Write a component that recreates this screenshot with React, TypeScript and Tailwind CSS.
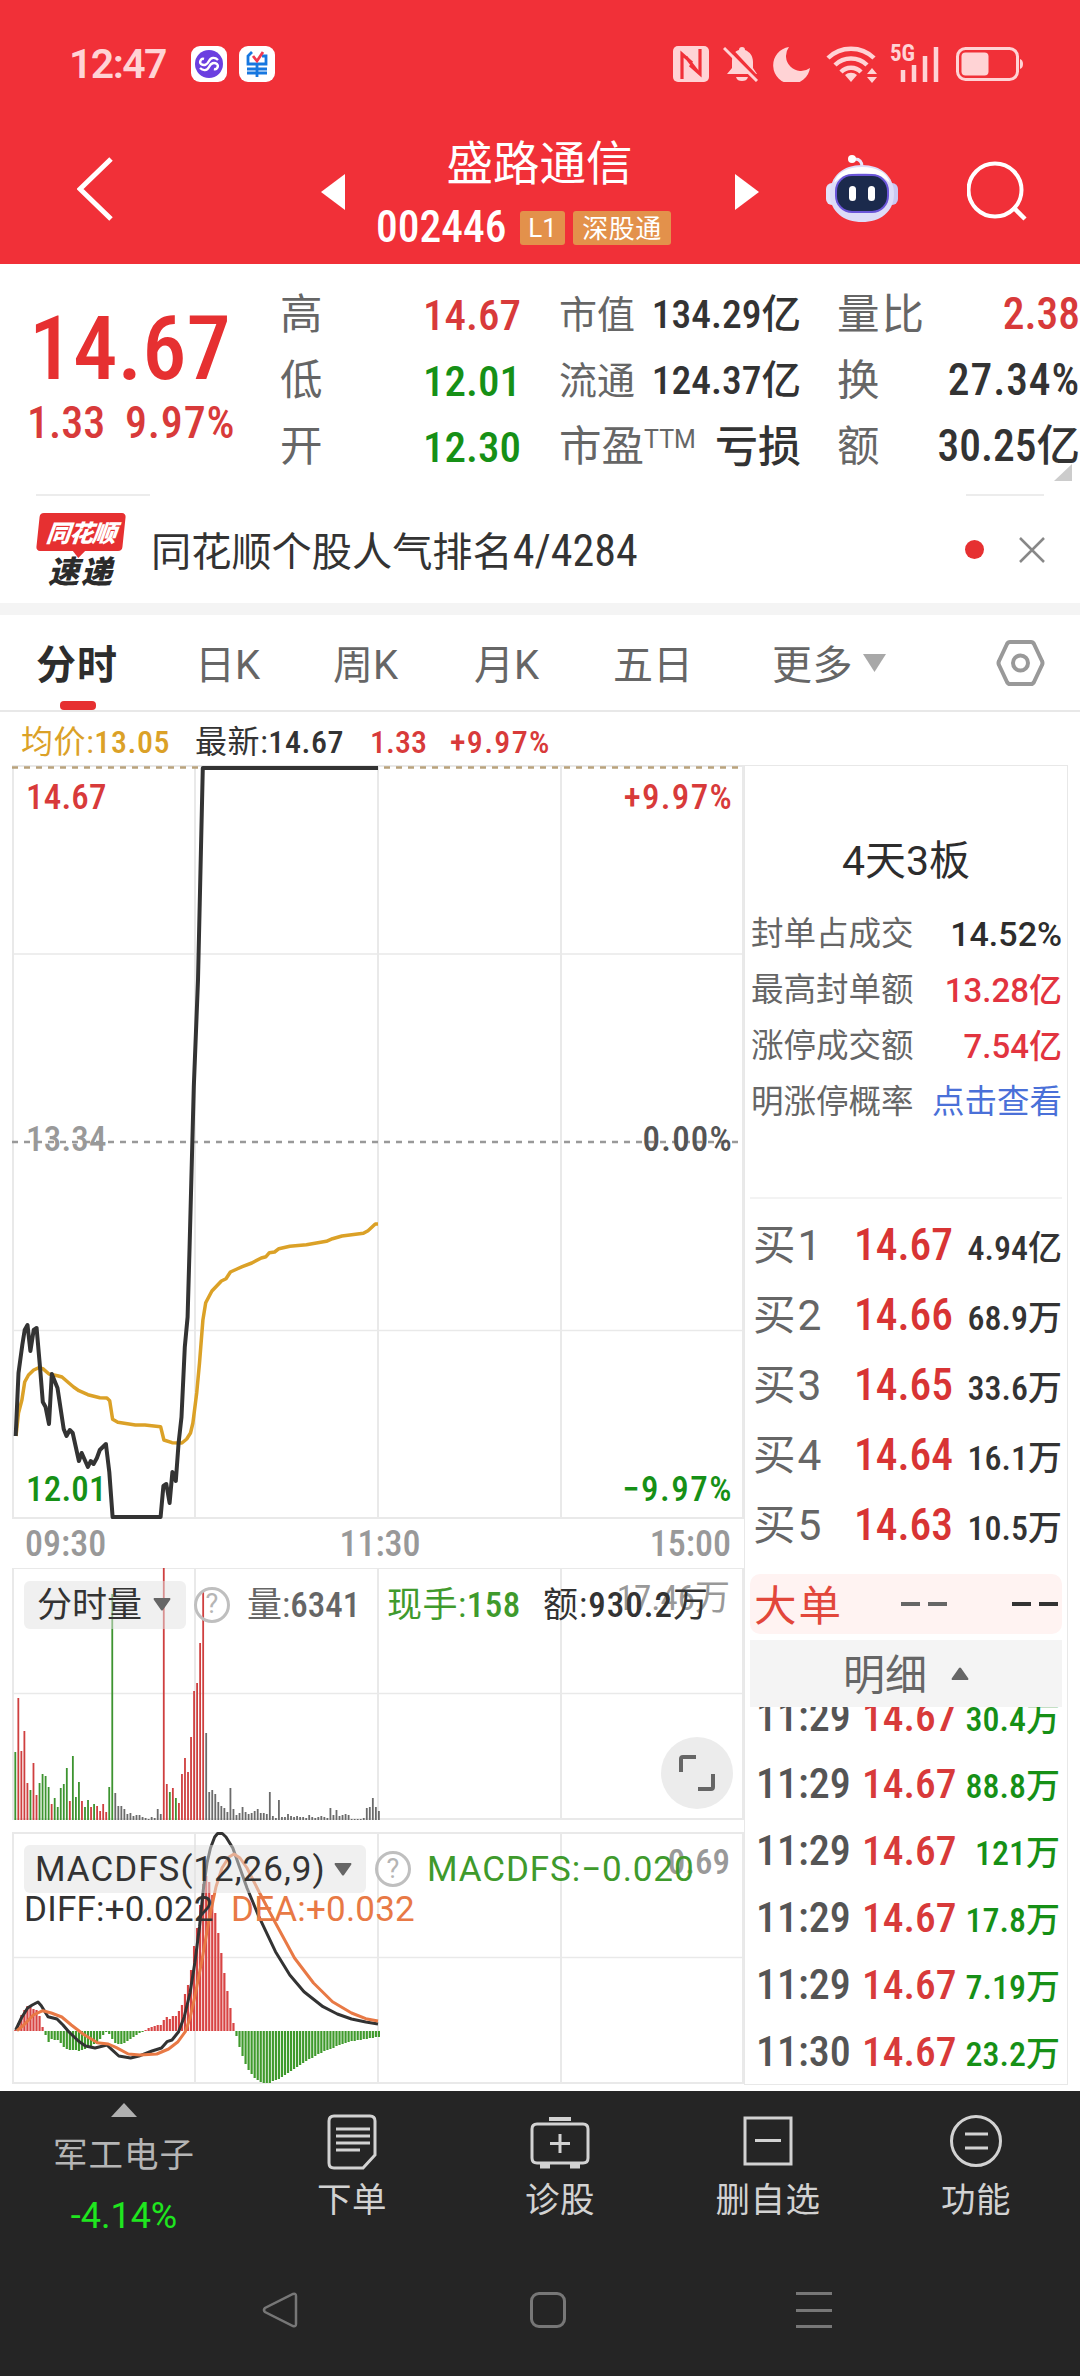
import React from 'react';

const UP = '#d83a3a';
const DOWN = '#169016';
const GRID_X = [13, 195, 378, 561, 743];

// intraday series, one slot per minute
const priceLine =
  '15.7,1436 18.5,1373 22.3,1345 24.7,1330 27.5,1325 30.4,1351 33.7,1330 36.6,1328 40,1367 42.8,1402 45.6,1407 49,1424 51.8,1374 57.5,1388 63.7,1429 66.5,1436 69.8,1430 72.7,1433 78.9,1461 81.7,1453 87.9,1467 90.7,1461 93.6,1464 96.9,1458 99.8,1450 105.9,1444 109.3,1472 112.6,1517 160.6,1517 163.4,1486 166.3,1484 169.6,1503 172.4,1472 175.8,1481 178.6,1443 181.5,1417 184.8,1347 187.6,1317 189.5,1250 192,1155 193.8,1087 198,980 202.8,768 378,768';
const avgLine =
  '16,1436 18.5,1413 21.9,1400 24.7,1382 28.5,1375 33.7,1370 39,1367.7 42.8,1368.7 49,1374 57.5,1375.7 62,1377 68.9,1383 73.6,1387 78.9,1390.7 87.9,1394.7 99.8,1397.7 106.9,1398 109.7,1400.7 112.6,1419.3 117.8,1422.3 135.4,1425 144.9,1425 160.6,1426.7 163.9,1440 172,1442.7 181.9,1443 186.7,1439 190.5,1433 192.9,1423 196.7,1393 199.5,1363 202.9,1320 205.7,1302.7 211.9,1291 221.4,1281 226,1278.7 230.4,1272 237,1269 242.3,1266.7 251.8,1263 261.3,1258 266,1256.7 269.4,1252.7 274.6,1252 278.9,1248.7 289.8,1246.3 306.4,1244.7 326.4,1241.3 332.5,1238.7 342,1236 363.4,1233.3 368,1230.7 375.3,1224 378,1224';
const diffLine =
  '15.7,2030 21.4,2018 27.6,2008 32.3,2005 38,2002 41.3,2005.7 48,2016.7 57,2019 63,2025 69,2032 78.4,2041 85.5,2046 95,2048 106.9,2045 111.6,2049.3 118.8,2056 130.6,2058 140,2055.7 152,2051 161.5,2048 167,2041.7 172,2040 178.6,2031.7 184.3,2016.7 190,1993 194.8,1963 199.5,1926.7 203.3,1890 207,1863 210.5,1848 214.7,1837 217.6,1833.5 222.3,1833.5 226,1837 232.8,1848 239.9,1868 247,1888 258.9,1916.7 275.5,1951.7 289.8,1975 304,1991.7 323,2006.7 337.3,2014 351.5,2019 365.8,2022 378,2024';
const deaLine =
  '17,2030.7 23.8,2025 33.3,2015 42.8,2010.7 51.3,2013 61.8,2017 71.3,2025 83,2034 97.4,2042.7 108.3,2044 116.4,2047.7 128.3,2054 140,2055 156.8,2054 168.6,2049 178,2041.7 185.3,2031.7 190,2018 194.8,1996.7 202,1960 209,1920 216,1886.7 222,1868 229,1857 234,1854 240,1858 247,1868 259,1891.7 275.5,1923 294.5,1958 313.5,1983 332.5,2001.7 351.5,2013 365.8,2018.7 378,2021';

const volumes = [
  68, 122, 69, 89, 37, 30, 57, 25, 37, 46, 44, 33, 16, 22, 13, 32, 36, 52, 19, 64, 23, 38, 19, 13, 20, 13, 16, 14, 9, 16,
  8, 33, 226, 27, 14, 14, 11, 6, 7, 4, 5, 5, 3, 2, 1, 3, 2, 11, 6, 253, 36, 28, 32, 22, 17, 46, 62, 48, 83, 129,
  137, 177, 228, 87, 28, 30, 26, 18, 14, 12, 8, 32, 11, 5, 7, 13, 8, 6, 7, 9, 11, 7, 7, 6, 28, 4, 2, 20, 3, 3,
  6, 4, 3, 4, 3, 3, 2, 5, 3, 2, 3, 4, 3, 2, 12, 5, 10, 4, 5, 6, 5, 1, 1, 1, 1, 2, 12, 13, 22, 13, 9,
];
const volumeSides = 'grrrrgrrggggrgggggrgggrggrgrrrrggkkkkkkkkkkkkkkkkrrgrgrrrrrrrrr';
const sideColor: Record<string, string> = { r: '#cf3f3f', g: '#3d9430', k: '#6b6b6b' };

const macd = [
  1, 8, 16, 21, 25, 24, 22, 21, 15, 4, -4, -11, -8, -9, -9, -12, -16, -18, -19, -19, -19, -20, -19, -18, -16, -15, -13, -13, -8, -4,
  -1, -3, -8, -12, -13, -13, -12, -10, -8, -6, -4, -2, -1, 1, 3, 4, 5, 6, 6, 11, 14, 12, 15, 15, 20, 26, 37, 46, 61, 85,
  103, 126, 147, 155, 149, 136, 118, 98, 78, 58, 40, 23, 8, -5, -16, -25, -33, -39, -43, -47, -49, -51, -52, -52, -52, -50, -49, -48, -46, -44,
  -42, -40, -38, -36, -34, -32, -30, -28, -27, -25, -23, -22, -20, -19, -18, -17, -15, -14, -13, -12, -11, -10, -10, -9, -9, -8, -8, -7, -7, -6, -6,
];

const slotX = (i: number) => 15.3 + i * 3.03;

function StatusBar() {
  return (
    <div className="flex h-[128px] items-center pl-[69px] pr-[56px] text-[#ffd3d5]">
      <span className="w-[122px] font-[Roboto] text-[41px] font-semibold leading-none tracking-[-1.600px]">12:47</span>
      <svg width="36" height="36" viewBox="0 0 36 36">
        <rect width="36" height="36" rx="9" fill="#fff" />
        <circle cx="18" cy="18" r="14" fill="#6b3fe0" />
        <path d="M27 14c-3-3-7-3-9 1s-5 5-8 3c-2-2 0-6 3-5M9 22c3 3 7 3 9-1s5-5 8-3c2 2 0 6-3 5" fill="none" stroke="#fff" strokeWidth="2.4" />
      </svg>
      <svg className="ml-[12px]" width="36" height="36" viewBox="0 0 36 36">
        <rect width="36" height="36" rx="9" fill="#fff" />
        <path d="M13 6l-4 4v8h18V10h-4M8 23h20M8 27h20M18 18v13" fill="none" stroke="#1677e0" strokeWidth="2.8" />
        <path d="M14 10l4 5 6-9" fill="none" stroke="#f03a50" strokeWidth="2.8" />
      </svg>
      <div className="ml-auto flex items-center">
        <svg width="36" height="36" viewBox="0 0 36 36">
          <rect width="36" height="36" rx="5" fill="#ffd3d5" />
          <path d="M9 33V8l10 9M27 3v25l-10-9M13 11l11 14" fill="none" stroke="#f13038" strokeWidth="3.2" />
        </svg>
        <svg className="ml-[14px]" width="38" height="36" viewBox="0 0 38 36">
          <path d="M19 1c2 0 3 1 3 3 5 2 8 6 8 12v6l4 6H4l5-6v-7C9 9 12 5 16 4c0-2 1-3 3-3zM13 31h12c-1 3-3 4-6 4s-5-1-6-4z" fill="#ffd3d5" />
          <path d="M3 -1l34 36" stroke="#f13038" strokeWidth="4" />
          <path d="M1 2l33 33" stroke="#ffd3d5" strokeWidth="3" />
        </svg>
        <svg className="ml-[12px]" width="38" height="36" viewBox="0 0 38 36">
          <path d="M16 1a15 15 0 0 0 21 21A18.500 18.500 0 1 1 16 1z" fill="#ffd3d5" />
        </svg>
        <svg className="ml-[15px]" width="54" height="38" viewBox="0 0 54 38">
          <g fill="none" stroke="#ffd3d5" strokeWidth="4.500">
            <path d="M2 13a33 33 0 0 1 46 0" />
            <path d="M9 20a23 23 0 0 1 32 0" />
            <path d="M15 27a14 14 0 0 1 20 0" />
          </g>
          <path d="M25 37l-6-7a9 9 0 0 1 12 0z" fill="#ffd3d5" />
          <path d="M46 23l5 6H41zM46 38l5-6H41z" fill="#ffd3d5" />
        </svg>
        <div className="relative ml-[20px] h-[36px] w-[40px]">
          <span className="absolute -left-[10px] -top-[2px] font-[Roboto_Condensed] text-[23px] font-bold leading-[20px]">5G</span>
          <svg width="40" height="36" viewBox="0 0 40 36">
            <path d="M3 36V24M14 36V19M25 36V10M36 36V1" stroke="#ffd3d5" strokeWidth="4.500" />
          </svg>
        </div>
        <svg className="ml-[16px]" width="68" height="36" viewBox="0 0 68 36">
          <rect x="1.500" y="2.500" width="60" height="31" rx="8" fill="none" stroke="#ffd3d5" strokeWidth="3" />
          <rect x="5.500" y="6.500" width="27" height="23" rx="4" fill="#ffd3d5" />
          <path d="M64 13q3 1 3 5t-3 5z" fill="#ffd3d5" />
        </svg>
      </div>
    </div>
  );
}

function Robot() {
  return (
    <svg width="72" height="68" viewBox="0 0 72 68">
      <path d="M36 12c0-5-2-8-7-8" fill="none" stroke="#e9e6fb" strokeWidth="3" />
      <circle cx="26" cy="4" r="4" fill="#fff" />
      <rect x="0" y="28" width="12" height="22" rx="6" fill="#e3e2fa" />
      <rect x="60" y="28" width="12" height="22" rx="6" fill="#c9c8f2" />
      <path d="M36 10c19 0 32 11 32 29S54 67 36 67 4 57 4 39s13-29 32-29z" fill="#dddcf8" />
      <path d="M36 12c14 0 25 5 28 16-8-8-18-10-28-10s-20 2-28 10c3-11 14-16 28-16z" fill="#fff" />
      <rect x="9" y="19" width="54" height="39" rx="17" fill="#6a55d8" />
      <rect x="11" y="21" width="50" height="35" rx="15" fill="#1b2a4c" />
      <rect x="23" y="31" width="7" height="15" rx="3.500" fill="#fff" />
      <rect x="42" y="31" width="7" height="15" rx="3.500" fill="#fff" />
    </svg>
  );
}

function TitleBar() {
  return (
    <div className="flex h-[136px] pl-[77px] text-white">
      <svg className="mt-[29px]" width="36" height="64" viewBox="0 0 36 64">
        <path d="M34 2L3 32l31 30" fill="none" stroke="#fff" strokeWidth="5" />
      </svg>
      <svg className="ml-[208px] mt-[46px]" width="24" height="36" viewBox="0 0 24 36">
        <path d="M24 0v36L0 18z" fill="#fff" />
      </svg>
      <div className="ml-[31px] w-[327px]">
        <div className="-mt-[1px] text-center font-[Noto_Sans_CJK_SC] text-[46.500px] leading-[66px]">盛路通信</div>
        <div className="flex h-[69px] items-center gap-[8px]">
          <span className="mr-[4px] w-[132px] font-[Roboto_Condensed] text-[43.500px] font-medium leading-none">002446</span>
          <span className="h-[34px] w-[45px] rounded-[3px] bg-[#e3914b] text-center font-[Roboto] text-[26px] leading-[34px]">L1</span>
          <span className="h-[34px] w-[98px] rounded-[3px] bg-[#e3914b] text-center font-[Noto_Sans_CJK_SC] text-[26px] leading-[32px] tracking-[0.5px]">深股通</span>
        </div>
      </div>
      <svg className="ml-[32px] mt-[46px]" width="24" height="36" viewBox="0 0 24 36">
        <path d="M0 0v36l24-18z" fill="#fff" />
      </svg>
      <div className="ml-[67px] mt-[27px]"><Robot /></div>
      <svg className="ml-[69px] mt-[33px]" width="60" height="60" viewBox="0 0 60 60">
        <circle cx="28" cy="29" r="26.500" fill="none" stroke="#fff" strokeWidth="4" />
        <path d="M46 46l12 12" stroke="#fff" strokeWidth="4.500" />
      </svg>
    </div>
  );
}

function QuoteRow({ label, value, color, size, small }: { label: React.ReactNode; value: string; color: string; size?: string; small?: boolean }) {
  return (
    <div className="flex h-[66px] items-center justify-between">
      <span className={small ? 'text-[38px] text-[#666]' : 'text-[42.500px] text-[#666]'}>{label}</span>
      <span className={`font-medium ${size || 'text-[43.500px]'} ${color}`}>{value}</span>
    </div>
  );
}

function Quote() {
  return (
    <div className="relative flex h-[230px] whitespace-nowrap font-[Roboto_Condensed,'Noto_Sans_CJK_SC',sans-serif]">
      <div className="w-[280px] pt-[45px] text-[#e63031]">
        <div className="pl-[29px] text-[88.500px] font-medium leading-[80px]">14.67</div>
        <div className="flex pl-[27px] text-[44px] font-medium leading-[69px] text-[#d83a3a]">
          <span className="w-[98px]">1.33</span>
          <span className="tracking-[0.8px]">9.97%</span>
        </div>
      </div>
      <div className="w-[241px] pt-[18px] leading-none">
        <QuoteRow label="高" value="14.67" color="text-[#d83a3a]" size="text-[43px]" />
        <QuoteRow label="低" value="12.01" color="text-[#169016]" size="text-[43px]" />
        <QuoteRow label="开" value="12.30" color="text-[#169016]" size="text-[43px]" />
      </div>
      <div className="ml-[38px] w-[242px] pt-[18px] leading-none">
        <QuoteRow label="市值" value="134.29亿" color="text-[#333]" size="text-[39.500px]" small />
        <QuoteRow label="流通" value="124.37亿" color="text-[#333]" size="text-[39.500px]" small />
        <QuoteRow label={<>市盈<sup className="relative -top-[13px] align-baseline font-[Roboto] text-[25px]">TTM</sup></>} value="亏损" color="text-[#333]" size="text-[43px]" />
      </div>
      <div className="ml-[36px] w-[243px] pt-[18px] leading-none">
        <QuoteRow label={<span className="tracking-[2px]">量比</span>} value="2.38" color="text-[#d83a3a]" />
        <QuoteRow label="换" value="27.34%" color="text-[#333]" size="text-[43.500px] tracking-[0.9px]" />
        <QuoteRow label="额" value="30.25亿" color="text-[#333]" />
      </div>
      <svg className="absolute bottom-[13px] right-[8px]" width="18" height="17" viewBox="0 0 18 17">
        <path d="M18 0v17H0z" fill="#ccc" />
      </svg>
    </div>
  );
}

function NewsFlash() {
  return (
    <div>
      <div className="flex h-[2px] justify-between px-[36px]">
        <div className="w-[114px] bg-[#ececec]" />
        <div className="w-[78px] bg-[#ececec]" />
      </div>
      <div className="flex h-[107px] items-center pl-[37px] pr-[35px]">
        <div className="flex w-[88px] flex-col items-center font-[Noto_Sans_CJK_SC] font-black italic">
          <div className="relative h-[38px] w-[86px] -skew-x-6 rounded-[4px] bg-[#e63031] text-center text-[24px] leading-[37px] tracking-[-1px] text-white">
            同花顺
            <svg className="absolute left-[36px] top-[37px]" width="14" height="8" viewBox="0 0 14 8">
              <path d="M0 0h14L7 8z" fill="#e63031" />
            </svg>
          </div>
          <div className="mt-[2px] text-[31px] leading-[34px] tracking-[2px] text-[#2b2b2b]">速递</div>
        </div>
        <div className="ml-[26px] pt-[2px] font-[Roboto_Condensed,'Noto_Sans_CJK_SC'] text-[40.200px] text-[#333]">
          同花顺个股人气排名<span className="font-[Roboto_Condensed] text-[44px]">4/4284</span>
        </div>
        <div className="ml-auto size-[19px] rounded-full bg-[#e63031]" />
        <svg className="ml-[35px]" width="26" height="26" viewBox="0 0 26 26">
          <path d="M1 1l24 24M25 1L1 25" stroke="#888" strokeWidth="2.500" />
        </svg>
      </div>
      <div className="h-[12px] bg-[#f4f4f4]" />
    </div>
  );
}

function Tabs() {
  return (
    <div className="relative flex h-[97px] items-center border-b-2 border-[#e8e8e8] pl-[36px] pr-[35px] font-[Roboto,'Noto_Sans_CJK_SC'] text-[40px] leading-[60px] text-[#666]">
      <span className="w-[159px] pt-[6px] font-bold tracking-[1px] text-[#2d2d2d]">分时</span>
      <span className="w-[138px] pt-[6px]">日K</span>
      <span className="w-[141px] pt-[6px]">周K</span>
      <span className="w-[139px] pt-[6px]">月K</span>
      <span className="w-[159px] pt-[6px]">五日</span>
      <span className="flex items-center gap-[10px]">
        <span className="pt-[6px] tracking-[0.5px]">更多</span>
        <svg width="23" height="18" viewBox="0 0 23 18">
          <path d="M0 0h23L11.500 18z" fill="#a8a8a8" />
        </svg>
      </span>
      <svg className="ml-auto" width="49" height="46" viewBox="0 0 49 46">
        <path d="M14 2h21q2 0 3 2l8 17q1 2 0 4l-8 17q-1 2-3 2H14q-2 0-3-2L3 25q-1-2 0-4l8-17q1-2 3-2z" fill="none" stroke="#999" strokeWidth="4" />
        <circle cx="24.500" cy="23" r="7.500" fill="none" stroke="#999" strokeWidth="4" />
      </svg>
      <div className="absolute bottom-0 left-[60px] h-[9px] w-[36px] rounded-[4px] bg-[#e63031]" />
    </div>
  );
}

function Grid({ top, mid, bottom }: { top: number; mid: number[]; bottom: number }) {
  return (
    <g stroke="#e9e9e9" strokeWidth="2">
      {GRID_X.map((x) => <path key={x} d={`M${x} ${top}V${bottom}`} />)}
      {[top + 1, bottom - 1].map((y) => <path key={y} d={`M12 ${y}H744`} />)}
      {mid.map((y) => <path key={y} d={`M12 ${y}H744`} strokeWidth="1.500" />)}
    </g>
  );
}

function PriceChart() {
  return (
    <svg className="block font-[Roboto_Condensed] text-[35px]" width="744" height="754" viewBox="0 765 744 754">
      <Grid top={765} mid={[954, 1330.5]} bottom={1519} />
      <path d="M12 767.500H744" stroke="#b9a27c" strokeWidth="2.500" strokeDasharray="6 6" />
      <path d="M12 1142H744" stroke="#999" strokeWidth="2.500" strokeDasharray="6 6" />
      <polyline points={avgLine} fill="none" stroke="#dba127" strokeWidth="3.500" strokeLinejoin="round" />
      <polyline points={priceLine} fill="none" stroke="#333" strokeWidth="4" strokeLinejoin="round" />
      <g className="font-medium">
        <text className="tracking-[0.2px]" x="26" y="809" fill={UP}>14.67</text>
        <text className="tracking-[1.300px]" x="733" y="809" fill={UP} textAnchor="end">+9.97%</text>
        <text className="tracking-[0.2px]" x="26" y="1151" fill="#999">13.34</text>
        <text className="tracking-[1.200px]" x="733" y="1151" fill="#555" textAnchor="end">0.00%</text>
        <text className="tracking-[0.2px]" x="26" y="1501" fill={DOWN}>12.01</text>
        <text className="tracking-[1.500px]" x="733" y="1501" fill={DOWN} textAnchor="end">−9.97%</text>
      </g>
    </svg>
  );
}

function Caret({ up }: { up?: boolean }) {
  return (
    <svg className={up ? 'rotate-180' : ''} width="18" height="13" viewBox="0 0 18 13">
      <path d="M1 0h16q1 1 0 2L10 12q-1 1-2 0L1 2Q0 1 1 0z" fill="#666" />
    </svg>
  );
}

function Help() {
  return (
    <span className="flex size-[36px] items-center justify-center rounded-full border-[3px] border-[#bfbfbf] font-[Roboto] text-[27px] leading-none text-[#b5b5b5]">?</span>
  );
}

function VolumeChart() {
  return (
    <div className="relative h-[252px] whitespace-nowrap font-[Roboto_Condensed,'Noto_Sans_CJK_SC'] text-[35px] leading-[48px]">
      <svg className="block" width="744" height="252" viewBox="0 1568 744 252">
        <Grid top={1567} mid={[1693.5]} bottom={1820} />
        {volumes.map((v, i) => (
          <rect key={i} x={slotX(i) - 0.9} y={1820 - v} width="1.8" height={v} fill={sideColor[volumeSides[i] || 'k']} />
        ))}
      </svg>
      <div className="absolute right-[14px] top-[7px] text-[#999]">17.46万</div>
      <div className="absolute left-[24px] top-[11px] flex items-center">
        <div className="flex h-[48px] w-[162px] items-center justify-between rounded-[6px] bg-[#e2e2e2]/50 pl-[13px] pr-[15px] text-[#333]"><span className="pt-[3px]">分时量</span> <Caret /></div>
        <div className="ml-[8px]"><Help /></div>
        <span className="ml-[17px] w-[140px] pt-[3px] text-[#666]">量:<b className="font-medium">6341</b></span>
        <span className="w-[156px] pt-[3px] tracking-[0.5px] text-[#3f9a2c]">现手:<b className="font-medium">158</b></span>
        <span className="pt-[3px] tracking-[1px] text-[#333]">额:<b className="font-medium">930.2</b>万</span>
      </div>
      <div className="absolute bottom-[11px] right-[11px] flex size-[72px] items-center justify-center rounded-full bg-[#ececec]">
        <svg width="38" height="38" viewBox="0 0 38 38">
          <path d="M3 18V5q0-2 2-2h13M35 20v13q0 2-2 2H20" fill="none" stroke="#666" strokeWidth="4" />
        </svg>
      </div>
    </div>
  );
}

function MacdChart() {
  return (
    <div className="relative mt-[12px] h-[252px] whitespace-nowrap font-[Roboto] text-[35px] leading-[48px]">
      <svg className="block" width="744" height="252" viewBox="0 1832 744 252">
        <Grid top={1832} mid={[1957.5]} bottom={2084} />
        {macd.map((v, i) => (
          <rect key={i} x={slotX(i) - 1.1} y={v > 0 ? 2031 - v : 2031} width="2.2" height={Math.abs(v)} fill={v > 0 ? '#d84444' : '#3f9a2c'} />
        ))}
        <polyline points={diffLine} fill="none" stroke="#333" strokeWidth="3" strokeLinejoin="round" />
        <polyline points={deaLine} fill="none" stroke="#e87945" strokeWidth="3" strokeLinejoin="round" />
      </svg>
      <div className="absolute right-[14px] top-[7px] font-[Roboto_Condensed] font-medium text-[#999]">0.69</div>
      <div className="absolute left-[24px] top-[12px] flex items-center">
        <div className="flex h-[48px] w-[342px] items-center justify-between rounded-[6px] bg-[#e2e2e2]/50 pl-[11px] pr-[14px] text-[#333]">
          <span className="pt-[2px] tracking-[1px]">MACDFS(12,26,9)</span> <Caret />
        </div>
        <div className="ml-[9px]"><Help /></div>
        <span className="ml-[16px] pt-[2px] tracking-[0.9px] text-[#3f9a2c]">MACDFS:−0.020</span>
      </div>
      <div className="absolute left-[24px] top-[54px] flex tracking-[0.2px]">
        <span className="w-[207px] text-[#333]">DIFF:+0.022</span>
        <span className="text-[#e87945]">DEA:+0.032</span>
      </div>
    </div>
  );
}

const sealStats = [
  ['封单占成交', '14.52%', 'font-medium text-[#2d2d2d] text-[34px]'],
  ['最高封单额', '13.28亿', 'font-medium text-[#e2343f] text-[33px]'],
  ['涨停成交额', '7.54亿', 'font-medium text-[#e2343f] text-[33px]'],
  ['明涨停概率', '点击查看', 'text-[#4a70d8] text-[32.5px]'],
];

const bids = [
  ['买1', '14.67', '4.94亿'],
  ['买2', '14.66', '68.9万'],
  ['买3', '14.65', '33.6万'],
  ['买4', '14.64', '16.1万'],
  ['买5', '14.63', '10.5万'],
];

const ticks = [
  ['11:29', '14.67', '30.4万'],
  ['11:29', '14.67', '88.8万'],
  ['11:29', '14.67', '121万'],
  ['11:29', '14.67', '17.8万'],
  ['11:29', '14.67', '7.19万'],
  ['11:30', '14.67', '23.2万'],
];

function OrderBook() {
  return (
    <div className="flex h-[1320px] w-[324px] flex-col whitespace-nowrap border border-[#e8e8e8] px-[5px] font-[Roboto_Condensed,'Noto_Sans_CJK_SC']">
      <div className="mt-[63px] text-center font-[Roboto,'Noto_Sans_CJK_SC'] text-[41px] leading-[64px] text-[#2d2d2d]">4天3板</div>
      <div className="mt-[13px] font-[Roboto,'Noto_Sans_CJK_SC']">
        {sealStats.map(([label, value, cls]) => (
          <div key={label} className="flex h-[56px] items-center justify-between pl-[1px] leading-none">
            <span className="text-[32.500px] text-[#666]">{label}</span>
            <span className={cls}>{value}</span>
          </div>
        ))}
      </div>
      <div className="mt-[67px] h-[2px] bg-[#f3f3f3]" />
      <div className="mt-[9px]">
        {bids.map(([label, price, vol]) => (
          <div key={label} className="flex h-[70px] items-baseline pl-[3px] leading-[75px]">
            <span className="w-[101px] font-[Roboto,'Noto_Sans_CJK_SC'] text-[42.500px] tracking-[2px] text-[#666]">{label}</span>
            <span className="text-[43.500px] font-medium text-[#d83434]">{price}</span>
            <span className="ml-auto text-[34px] font-medium leading-none text-[#333]">{vol}</span>
          </div>
        ))}
      </div>
      <div className="mt-[16px] flex h-[60px] shrink-0 items-center rounded-[10px] bg-[#fff3f2] pl-[4px] pr-[4px] text-[#e2473b]">
        <span className="w-[147px] pb-[3px] font-[Noto_Sans_CJK_SC] text-[42.500px] leading-[57px] tracking-[2px]">大单</span>
        <span className="flex gap-[8px]"><i className="h-[4px] w-[19px] bg-[#666]" /><i className="h-[4px] w-[19px] bg-[#666]" /></span>
        <span className="ml-auto flex gap-[8px]"><i className="h-[4px] w-[19px] bg-[#333]" /><i className="h-[4px] w-[19px] bg-[#333]" /></span>
      </div>
      <div className="mt-[6px] flex h-[67px] shrink-0 items-center justify-center gap-[24px] bg-[#f4f4f4] text-[42px] text-[#666]">
        <span className="pt-[4px]">明细</span> <Caret up />
      </div>
      <div className="flex h-[376px] flex-col justify-end overflow-hidden">
        {ticks.map(([time, price, vol], i) => (
          <div key={i} className="flex h-[67px] shrink-0 items-baseline pl-[6px] pr-[2px] leading-[72px]">
            <span className="w-[106px] font-[Roboto_Condensed] text-[42px] font-medium text-[#555]">{time}</span>
            <span className="text-[41.500px] font-medium text-[#d83a3a]">{price}</span>
            <span className="ml-auto text-[34px] font-medium leading-none text-[#169016]">{vol}</span>
          </div>
        ))}
      </div>
    </div>
  );
}

const actions = [
  {
    label: '下单',
    icon: <><path d="M7 2h36q5 0 5 5v34L36 54H7q-5 0-5-5V7q0-5 5-5z" /><path d="M9 15h34M9 22h34M9 29h34M9 36h24" /></>,
  },
  {
    label: '诊股',
    icon: <><path d="M14 5h22" strokeWidth="4" /><path d="M2 10q-5 0-5 5v29q0 5 5 5h46q5 0 5-5V15q0-5-5-5z" /><path d="M25 20v19M15 29.500h20" /><path d="M5 52h10M35 52h10" strokeWidth="5" /></>,
  },
  { label: '删自选', icon: <><path d="M2 4h46v46H2z" /><path d="M12 26.500h26" /></> },
  { label: '功能', icon: <><circle cx="25" cy="27" r="24.500" /><path d="M14 20h23M14 34h23" /></> },
];

function BottomBar() {
  return (
    <div className="h-[285px] bg-[#252525] font-[Noto_Sans_CJK_SC] text-[34.500px] text-[#ccc]">
      <div className="flex h-[160px]">
        <div className="flex w-[248px] flex-col items-center pt-[12px]">
          <svg width="26" height="14" viewBox="0 0 26 14">
            <path d="M13 0l13 14H0z" fill="#b0b0b0" />
          </svg>
          <div className="mt-[10px] leading-[50px] tracking-[1px] text-[#b5b5b5]">军工电子</div>
          <div className="mt-[17px] font-[Roboto] text-[36px] leading-[44px] text-[#1fe61f]">-4.14%</div>
        </div>
        {actions.map((a) => (
          <div key={a.label} className="flex w-[208px] flex-col items-center pt-[23px]">
            <svg className="overflow-visible" width="50" height="56" viewBox="0 0 50 56" fill="none" stroke="#d2d2d2" strokeWidth="3">
              {a.icon}
            </svg>
            <div className="mt-[2px] leading-[50px] tracking-[0.5px] text-[#d2d2d2]">{a.label}</div>
          </div>
        ))}
      </div>
      <div className="flex pl-[262px] pt-[41px]">
        <svg width="36" height="36" viewBox="0 0 36 36">
          <path d="M31 2q3-1 3 2v28q0 3-3 2L3 20q-2-2 0-4z" fill="none" stroke="#777" strokeWidth="2.500" />
        </svg>
        <div className="ml-[232px] size-[36px] rounded-[9px] border-[3px] border-[#777]" />
        <div className="ml-[230px] flex h-[36px] w-[36px] flex-col justify-between">
          <div className="h-[3px] bg-[#777]" />
          <div className="h-[3px] bg-[#777]" />
          <div className="h-[3px] bg-[#777]" />
        </div>
      </div>
    </div>
  );
}

export default function App() {
  return (
    <div className="h-[2376px] w-[1080px] overflow-hidden bg-white">
      <div className="h-[264px] bg-[#f13038]">
        <StatusBar />
        <TitleBar />
      </div>
      <Quote />
      <NewsFlash />
      <Tabs />
      <div className="flex h-[53px] items-center whitespace-nowrap pl-[21px] pt-[6px] font-[Roboto_Condensed,'Noto_Sans_CJK_SC'] text-[32px] text-[#333]">
        <span className="w-[174px] tracking-[0.6px] text-[#dba127]">均价:<b className="font-medium">13.05</b></span>
        <span className="w-[175px] tracking-[0.6px]">最新:<b className="font-medium">14.67</b></span>
        <span className="w-[80px] font-medium text-[#d83a3a]">1.33</span>
        <span className="font-medium tracking-[1.300px] text-[#d83a3a]">+9.97%</span>
      </div>
      <div className="flex h-[1326px]">
        <div className="w-[744px]">
          <PriceChart />
          <div className="flex h-[49px] items-center justify-between pl-[25px] pr-[13px] font-[Roboto_Condensed] text-[36px] font-medium text-[#999]">
            <span>09:30</span>
            <span className="pl-[4px]">11:30</span>
            <span>15:00</span>
          </div>
          <VolumeChart />
          <MacdChart />
        </div>
        <OrderBook />
      </div>
      <BottomBar />
    </div>
  );
}
